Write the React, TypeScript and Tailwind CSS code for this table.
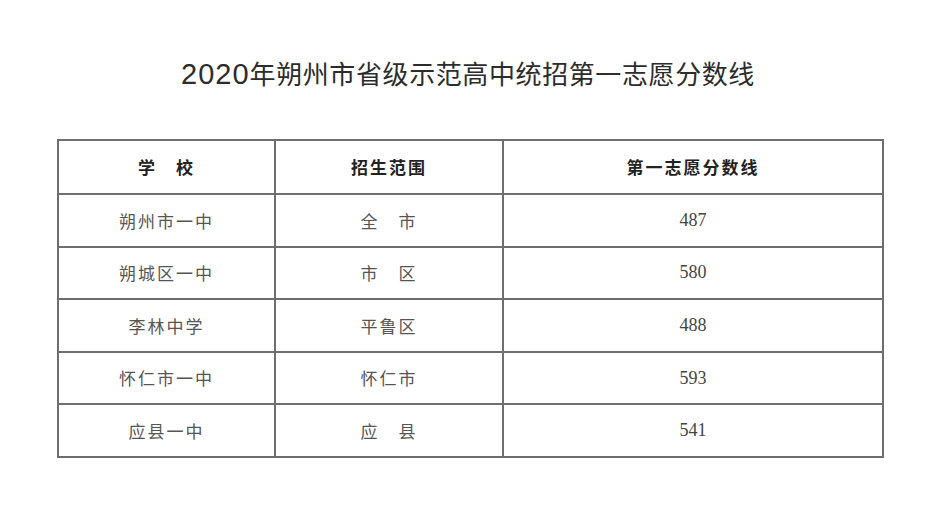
const ROWS = [
  { school: '朔州市一中', range: '全　市', score: '487' },
  { school: '朔城区一中', range: '市　区', score: '580' },
  { school: '李林中学', range: '平鲁区', score: '488' },
  { school: '怀仁市一中', range: '怀仁市', score: '593' },
  { school: '应县一中', range: '应　县', score: '541' },
];

const cjk = { fontFamily: '"Noto Sans CJK SC", "Noto Sans", sans-serif' };
const serif = { fontFamily: '"Liberation Serif", "Noto Sans CJK SC", serif' };

export default function App() {
  return (
    <div className="w-[936px] h-[509px] bg-white overflow-hidden" style={cjk}>
      {/* Title */}
      <div className="pt-[60px] h-[86px] text-center text-[26px] leading-[26px] tracking-[0.6px] text-[#2c2c2c]">
        <span className="text-[29px] tracking-[1px]" style={{ fontFamily: '"Liberation Sans", sans-serif' }}>2020</span>
        年朔州市省级示范高中统招第一志愿分数线
      </div>

      {/* Table */}
      <table className="mt-[53px] ml-[57px] w-[827px] border-collapse table-fixed">
        <colgroup>
          <col className="w-[217px]" />
          <col className="w-[228px]" />
          <col />
        </colgroup>
        <thead>
          <tr className="h-[54px]">
            <th className="border-2 border-[#6e6e6e] text-[17px] font-bold tracking-[2px] text-[#222]">学　校</th>
            <th className="border-2 border-[#6e6e6e] text-[17px] font-bold tracking-[2px] text-[#222]">招生范围</th>
            <th className="border-2 border-[#6e6e6e] text-[17px] font-bold tracking-[2px] text-[#222]">第一志愿分数线</th>
          </tr>
        </thead>
        <tbody>
          {ROWS.map((r) => (
            <tr key={r.school} className="h-[52.6px]">
              <td className="border-2 border-[#6e6e6e] text-center text-[17px] tracking-[2px] text-[#555]">{r.school}</td>
              <td className="border-2 border-[#6e6e6e] text-center text-[17px] tracking-[2px] text-[#555]">{r.range}</td>
              <td className="border-2 border-[#6e6e6e] text-center text-[18px] text-[#444]" style={serif}>{r.score}</td>
            </tr>
          ))}
        </tbody>
      </table>
    </div>
  );
}
